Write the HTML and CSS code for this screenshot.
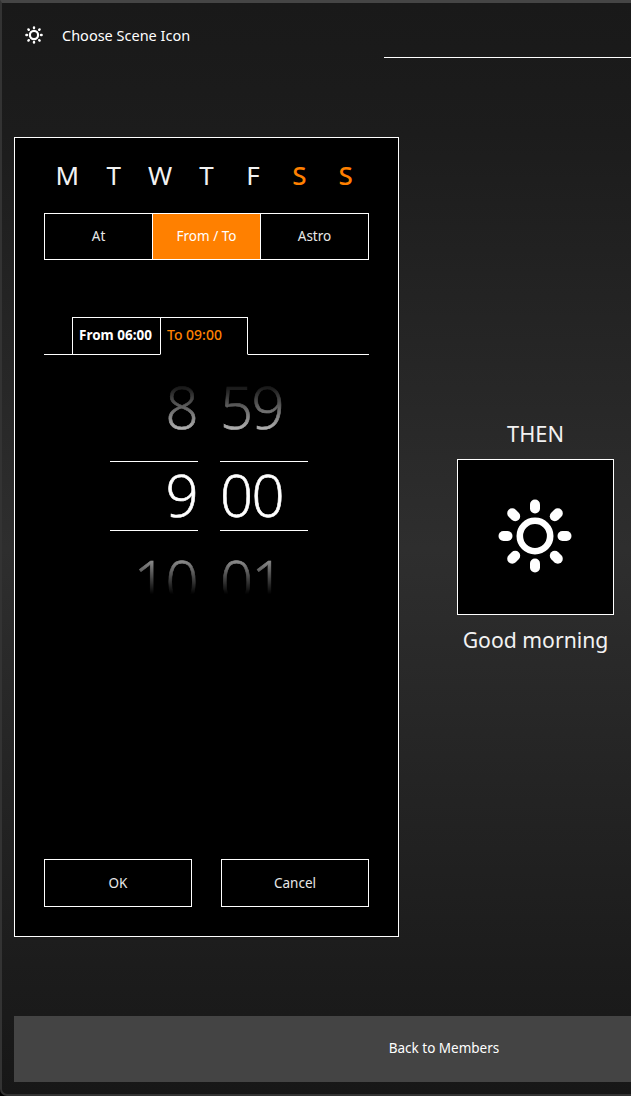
FILE: index.html
```html
<!DOCTYPE html>
<html lang="en">
<head>
    <meta charset="UTF-8">
    <title>Choose Scene Icon</title>
    <link rel="stylesheet" href="styles.css">
</head>
<body>
    <div class="window">
        <header class="header">
            <div class="headerLeft">
                <svg class="headerIcon" viewBox="0 0 18 18" aria-hidden="true">
                    <g fill="none" stroke="#fff">
                        <circle cx="9" cy="9" r="4.1" stroke-width="2.2"></circle>
                        <g stroke-width="2.4" stroke-linecap="round">
                            <path d="M9 1.4v.6"></path>
                            <path d="M9 16v.6"></path>
                            <path d="M1.4 9H2"></path>
                            <path d="M16 9h.6"></path>
                            <path d="M3.4 3.4l.4.4"></path>
                            <path d="M14.2 3.8l.4-.4"></path>
                            <path d="M3.4 14.6l.4-.4"></path>
                            <path d="M14.2 14.2l.4.4"></path>
                        </g>
                    </g>
                </svg>
                <span class="headerTitle">Choose Scene Icon</span>
            </div>
            <div class="headerLine"></div>
        </header>

        <main class="main">
            <section class="dialog">
                <div class="days">
                    <span>M</span>
                    <span>T</span>
                    <span>W</span>
                    <span>T</span>
                    <span>F</span>
                    <span class="weekend">S</span>
                    <span class="weekend">S</span>
                </div>

                <div class="modes">
                    <div class="mode">At</div>
                    <div class="mode active">From / To</div>
                    <div class="mode">Astro</div>
                </div>

                <div class="tabs">
                    <div class="tab from">From 06:00</div>
                    <div class="tab to">To 09:00</div>
                </div>

                <div class="picker">
                    <div class="pickerCol hours">
                        <div class="cell above">8</div>
                        <div class="cell current">9</div>
                        <div class="cell below">10</div>
                    </div>
                    <div class="pickerCol minutes">
                        <div class="cell above">59</div>
                        <div class="cell current">00</div>
                        <div class="cell below">01</div>
                    </div>
                </div>

                <div class="actions">
                    <div class="action">OK</div>
                    <div class="action">Cancel</div>
                </div>
            </section>

            <section class="then">
                <div class="thenLabel">THEN</div>
                <div class="sceneBox">
                    <svg class="sceneIcon" viewBox="0 0 74 74" aria-hidden="true">
                        <g fill="none" stroke="#fff">
                            <circle cx="37" cy="37" r="15.2" stroke-width="6.6"></circle>
                            <g stroke-width="10" stroke-linecap="round">
                                <path d="M37 5.5v4"></path>
                                <path d="M37 64.5v4"></path>
                                <path d="M5.5 37h4"></path>
                                <path d="M64.5 37h4"></path>
                                <path d="M14.2 14.2l3 3"></path>
                                <path d="M56.8 17.2l3-3"></path>
                                <path d="M14.2 59.8l3-3"></path>
                                <path d="M56.8 56.8l3 3"></path>
                            </g>
                        </g>
                    </svg>
                </div>
                <div class="sceneName">Good morning</div>
            </section>
        </main>

        <footer class="footerBar">Back to Members</footer>
    </div>
</body>
</html>
```

FILE: styles.css
```css
html, body {
    margin: 0;
    height: 100%;
    background: #000;
}
body {
    font-family: "Noto Sans", sans-serif;
    color: #fff;
    overflow: hidden;
}
.window {
    box-sizing: border-box;
    display: flex;
    flex-direction: column;
    width: 631px;
    height: 1096px;
    overflow: hidden;
    border-top: 3px solid #454545;
    border-left: 2px solid #333;
    border-bottom: 2px solid #333;
    border-bottom-left-radius: 7px;
    background: linear-gradient(#191919 0%, #1c1c1c 12%, #2e2e2e 50%, #1c1c1c 88%, #171717 100%);
}
.header {
    display: flex;
    flex: none;
    height: 55px;
}
.headerLeft {
    display: flex;
    align-items: center;
    flex: none;
    width: 382px;
    padding: 9px 0 0 23px;
    box-sizing: border-box;
}
.headerIcon {
    width: 18px;
    height: 18px;
}
.headerTitle {
    margin-left: 19px;
    font-size: 14.5px;
}
.headerLine {
    flex: 1;
    align-self: flex-end;
    height: 1px;
    background: #fff;
}
.main {
    display: flex;
    align-items: center;
    flex: 1;
    padding-left: 12px;
}
.dialog {
    box-sizing: border-box;
    display: flex;
    flex-direction: column;
    flex: none;
    width: 385px;
    height: 800px;
    padding: 0 29px 29px;
    border: 1px solid #fff;
    background: #000;
}
.days {
    display: grid;
    grid-template-columns: repeat(7, 1fr);
    height: 75px;
    line-height: 75px;
    font-size: 26px;
    text-align: center;
    color: #f2f2f2;
}
.weekend {
    color: #ff8000;
    font-weight: 500;
}
.modes {
    display: grid;
    grid-template-columns: 109px 108px 108px;
    height: 47px;
    flex: none;
}
.mode {
    box-sizing: border-box;
    display: flex;
    align-items: center;
    justify-content: center;
    padding-bottom: 2px;
    font-size: 13.5px;
    color: #e8e8e8;
    border: 1px solid #fff;
    border-left: 0;
}
.mode:first-child {
    border-left: 1px solid #fff;
}
.mode.active {
    background: #ff8000;
    color: #fff;
}
.tabs {
    box-sizing: border-box;
    display: flex;
    flex: none;
    height: 38px;
    margin-top: 57px;
    padding-left: 28px;
    border-bottom: 1px solid #fff;
    font-size: 14px;
    line-height: 34px;
}
.tab {
    box-sizing: border-box;
    width: 89px;
    height: 38px;
    padding-left: 6px;
    border: 1px solid #fff;
    white-space: nowrap;
}
.tab.from {
    font-weight: 700;
    font-size: 13.5px;
}
.tab.to {
    width: 88px;
    margin-left: -1px;
    border-bottom: 1px solid #000;
    color: #ff8000;
    font-weight: 500;
}
.picker {
    display: flex;
    flex: none;
    gap: 22px;
    margin: 19px 0 0 66px;
}
.pickerCol {
    width: 88px;
}
.cell {
    box-sizing: border-box;
    height: 70px;
    margin-bottom: 17px;
    font-family: "Open Sans", sans-serif;
    font-weight: 300;
    font-size: 58px;
    letter-spacing: -1.5px;
    line-height: 66px;
    -webkit-text-stroke: 0.6px #fff;
}
.hours .cell {
    padding-right: 1px;
    text-align: right;
}
.minutes .cell {
    text-align: left;
}
.current {
    border-top: 1px solid #fff;
    border-bottom: 1px solid #fff;
}
.above {
    -webkit-mask-image: linear-gradient(rgba(0, 0, 0, 0.1) 20%, rgba(0, 0, 0, 0.7) 80%);
    mask-image: linear-gradient(rgba(0, 0, 0, 0.1) 20%, rgba(0, 0, 0, 0.7) 80%);
}
.below {
    -webkit-mask-image: linear-gradient(rgba(0, 0, 0, 0.55) 18%, transparent 66%);
    mask-image: linear-gradient(rgba(0, 0, 0, 0.55) 18%, transparent 66%);
}
.actions {
    display: flex;
    justify-content: space-between;
    margin-top: auto;
}
.action {
    display: flex;
    align-items: center;
    justify-content: center;
    box-sizing: border-box;
    width: 148px;
    height: 48px;
    border: 1px solid #fff;
    font-size: 13.5px;
    color: #e8e8e8;
}
.then {
    display: flex;
    flex-direction: column;
    align-items: center;
    flex: none;
    width: 157px;
    margin-left: 58px;
}
.thenLabel {
    margin-bottom: 10px;
    font-size: 21.8px;
    line-height: 31px;
    color: #f2f2f2;
}
.sceneBox {
    display: flex;
    align-items: center;
    justify-content: center;
    box-sizing: border-box;
    width: 157px;
    height: 156px;
    border: 1px solid #fff;
    background: #000;
}
.sceneIcon {
    width: 74px;
    height: 74px;
    margin: 0 1px 2px 0;
}
.sceneName {
    margin-top: 9px;
    font-size: 21.2px;
    line-height: 32px;
    white-space: nowrap;
    color: #f2f2f2;
}
.footerBar {
    display: flex;
    align-items: center;
    justify-content: center;
    flex: none;
    width: 860px;
    height: 66px;
    margin: 0 0 12px 12px;
    padding-bottom: 2px;
    box-sizing: border-box;
    background: #444;
    font-size: 13.5px;
}
```
